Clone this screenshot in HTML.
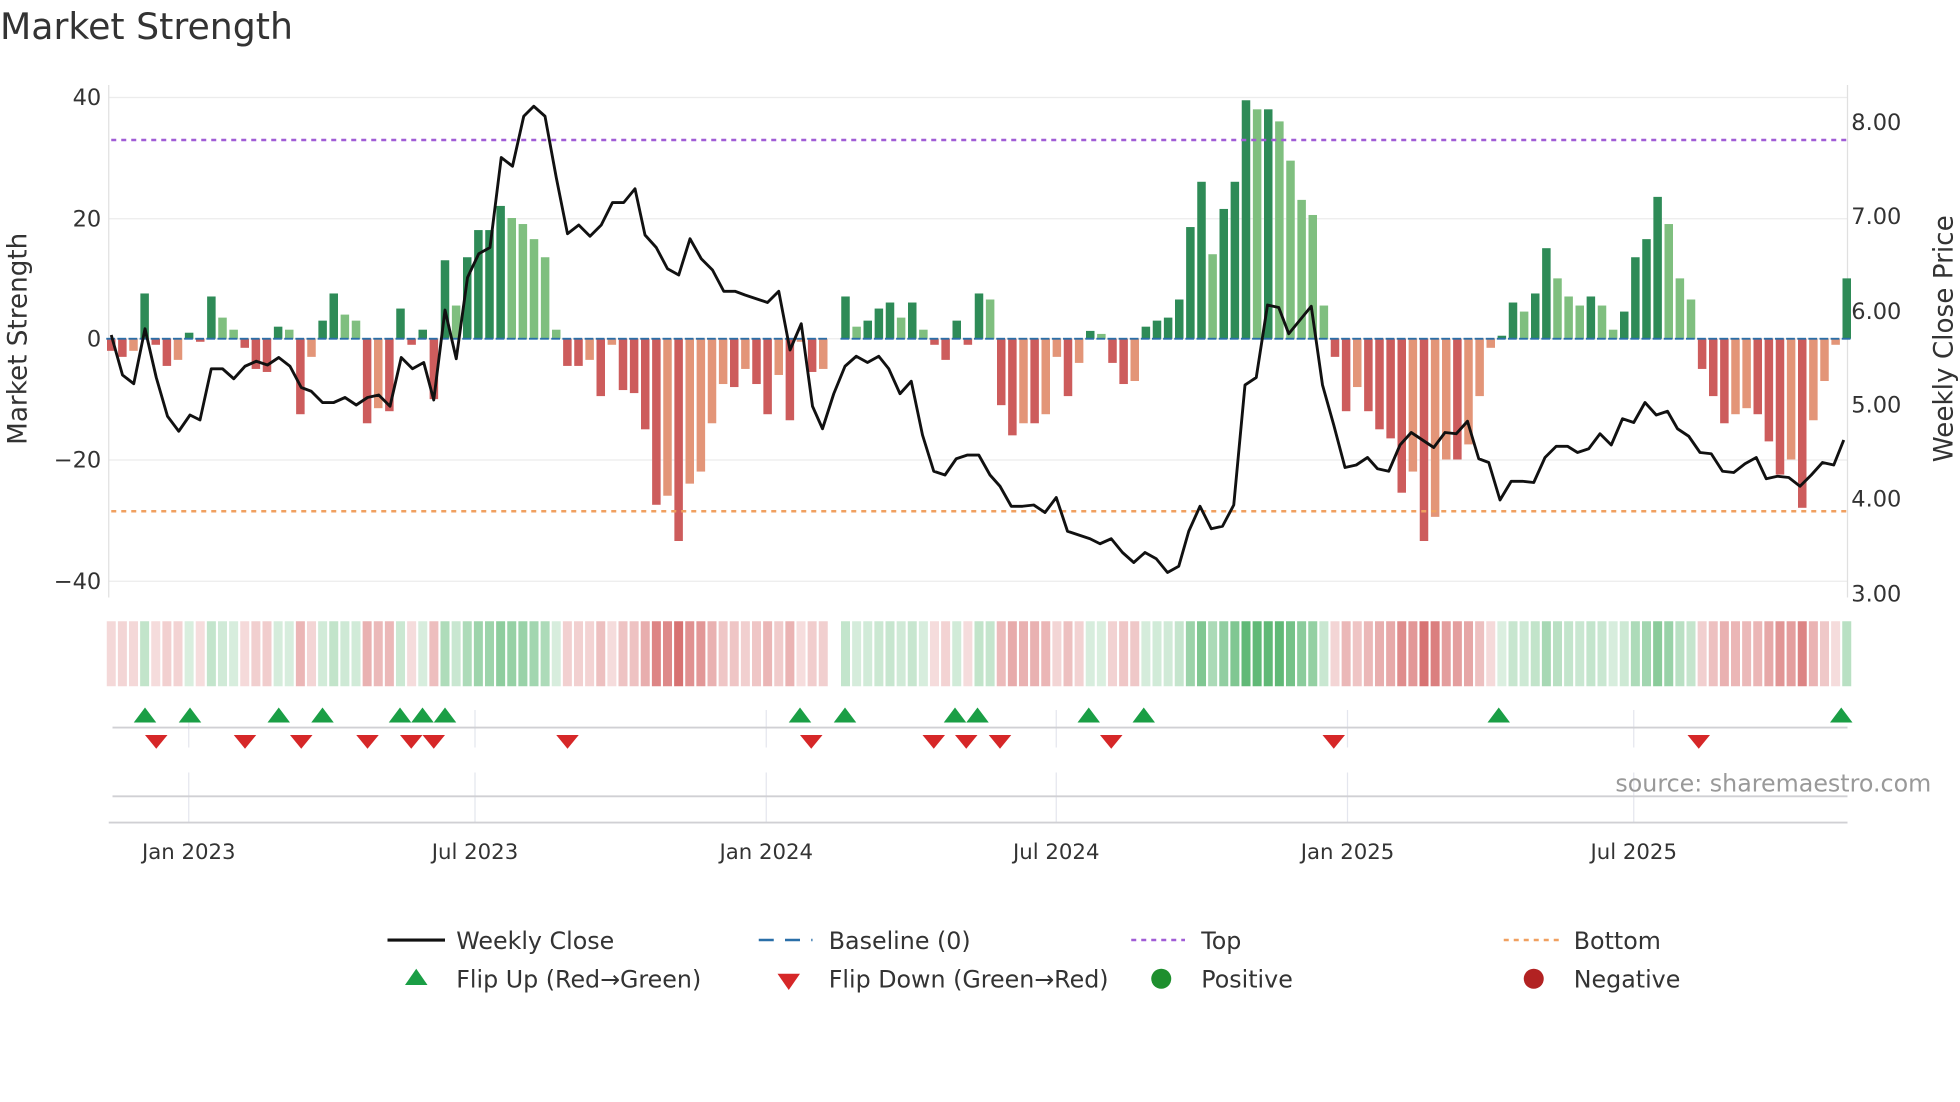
<!DOCTYPE html>
<html><head><meta charset="utf-8"><style>
html,body{margin:0;padding:0;background:#fff;}
svg{display:block;font-family:"DejaVu Sans","Liberation Sans",sans-serif;}
</style></head><body>
<svg id="c" width="1960" height="1102" viewBox="0 0 1568 881.6" xmlns="http://www.w3.org/2000/svg">
<rect width="1568" height="882" fill="#fff"/>
<text x="0" y="31" font-size="29" fill="#333">Market Strength</text>
<g stroke="#ececec" stroke-width="1">
<line x1="87" x2="1478" y1="78" y2="78"/><line x1="87" x2="1478" y1="175" y2="175"/><line x1="87" x2="1478" y1="271" y2="271"/><line x1="87" x2="1478" y1="368" y2="368"/><line x1="87" x2="1478" y1="465" y2="465"/>
</g>
<g stroke="#e4e6ee" stroke-width="1">
<line x1="151" x2="151" y1="568" y2="598"/><line x1="380" x2="380" y1="568" y2="598"/><line x1="613" x2="613" y1="568" y2="598"/><line x1="845" x2="845" y1="568" y2="598"/><line x1="1078" x2="1078" y1="568" y2="598"/><line x1="1307" x2="1307" y1="568" y2="598"/>
<line x1="151" x2="151" y1="618" y2="658"/><line x1="380" x2="380" y1="618" y2="658"/><line x1="613" x2="613" y1="618" y2="658"/><line x1="845" x2="845" y1="618" y2="658"/><line x1="1078" x2="1078" y1="618" y2="658"/><line x1="1307" x2="1307" y1="618" y2="658"/>
</g>
<line x1="87" x2="87" y1="68" y2="478" stroke="#e0e0e0"/>
<line x1="1478" x2="1478" y1="68" y2="478" stroke="#e0e0e0"/>
<g id="bars"></g>
<g id="heat"></g>
<line x1="89" x2="1478" y1="112" y2="112" stroke="#a05cd6" stroke-width="2" stroke-dasharray="4,4"/>
<line x1="89" x2="1478" y1="409" y2="409" stroke="#f0a060" stroke-width="2" stroke-dasharray="4,4"/>
<polyline id="pl" fill="none" stroke="#111" stroke-width="2.3" stroke-linejoin="round"/>
<line x1="90" x2="1478" y1="582" y2="582" stroke="#d0d0d4" stroke-width="1.5"/>
<line x1="90" x2="1478" y1="637" y2="637" stroke="#d0d0d4" stroke-width="1.5"/>
<line x1="87" x2="1478" y1="658" y2="658" stroke="#d0d0d4" stroke-width="1.5"/>
<g id="mk"></g>
<g font-size="18" fill="#333" text-anchor="end">
<text x="81" y="84">40</text><text x="81" y="181">20</text><text x="81" y="277">0</text><text x="81" y="374">−20</text><text x="81" y="471">−40</text>
</g>
<g font-size="18" fill="#333">
<text x="1481" y="104">8.00</text><text x="1481" y="179">7.00</text><text x="1481" y="255">6.00</text><text x="1481" y="330">5.00</text><text x="1481" y="405">4.00</text><text x="1481" y="481">3.00</text>
</g>
<text transform="translate(21,271) rotate(-90)" font-size="21" fill="#333" text-anchor="middle">Market Strength</text>
<text transform="translate(1562,271) rotate(-90)" font-size="21" fill="#333" text-anchor="middle">Weekly Close Price</text>
<text x="1545" y="633" font-size="19" fill="#999" text-anchor="end">source: sharemaestro.com</text>
<g font-size="17" fill="#333" text-anchor="middle">
<text x="151" y="687">Jan 2023</text><text x="380" y="687">Jul 2023</text><text x="613" y="687">Jan 2024</text><text x="845" y="687">Jul 2024</text><text x="1078" y="687">Jan 2025</text><text x="1307" y="687">Jul 2025</text>
</g>
<g font-size="19" fill="#333">
<line x1="310" x2="356" y1="752" y2="752" stroke="#111" stroke-width="2.5"/><text x="365" y="759">Weekly Close</text>
<line x1="607" x2="650" y1="752" y2="752" stroke="#2a6fa8" stroke-width="2" stroke-dasharray="12,9"/><text x="663" y="759">Baseline (0)</text>
<line x1="905" x2="948" y1="752" y2="752" stroke="#a05cd6" stroke-width="2" stroke-dasharray="4,4"/><text x="961" y="759">Top</text>
<line x1="1203" x2="1247" y1="752" y2="752" stroke="#f0a060" stroke-width="2" stroke-dasharray="4,4"/><text x="1259" y="759">Bottom</text>
<polygon points="324,788 342,788 333,775" fill="#1a9e45"/><text x="365" y="790">Flip Up (Red→Green)</text>
<polygon points="622,779 640,779 631,792" fill="#d62728"/><text x="663" y="790">Flip Down (Green→Red)</text>
<circle cx="929" cy="783" r="8" fill="#1e8f2e"/><text x="961" y="790">Positive</text>
<circle cx="1227" cy="783" r="8" fill="#b22222"/><text x="1259" y="790">Negative</text>
</g>
</svg>
<script>
var v=[-2,-3,-2,7.5,-1,-4.5,-3.5,1,-0.5,7,3.5,1.5,-1.5,-5,-5.5,2,1.5,-12.5,-3,3,7.5,4,3,-14,-11.5,-12,5,-1,1.5,-10,13,5.5,13.5,18,18,22,20,19,16.5,13.5,1.5,-4.5,-4.5,-3.5,-9.5,-1,-8.5,-9,-15,-27.5,-26,-33.5,-24,-22,-14,-7.5,-8,-5,-7.5,-12.5,-6,-13.5,-0.5,-5.5,-5,null,7,2,3,5,6,3.5,6,1.5,-1,-3.5,3,-1,7.5,6.5,-11,-16,-14,-14,-12.5,-3,-9.5,-4,1.3,0.8,-4,-7.5,-7,2,3,3.5,6.5,18.5,26,14,21.5,26,39.5,38,38,36,29.5,23,20.5,5.5,-3,-12,-8,-12,-15,-16.5,-25.5,-22,-33.5,-29.5,-20,-20,-17.5,-9.5,-1.5,0.5,6,4.5,7.5,15,10,7,5.5,7,5.5,1.5,4.5,13.5,16.5,23.5,19,10,6.5,-5,-9.5,-14,-12.5,-11.5,-12.5,-17,-22.5,-20,-28,-13.5,-7,-1,10];
var ns="http://www.w3.org/2000/svg",b=document.getElementById('bars'),h=document.getElementById('heat');
function el(p,t,a){var e=document.createElementNS(ns,t);for(var k in a)e.setAttribute(k,a[k]);p.appendChild(e);return e;}
var prev=0;
for(var i=0;i<v.length;i++){var x=89+8.9*i,y0=271,val=v[i];if(val===null){prev=0;continue;}
var hgt=Math.abs(val)*4.83,c;
if(val>=0)c=(val>=prev)?'#2e8b57':'#7fbf7f';else c=(val<=prev)?'#cd5c5c':'#e39578';
el(b,'rect',{x:x-3.4,y:val>=0?y0-hgt:y0,width:6.8,height:Math.max(hgt,0.8),fill:c});
el(b,'line',{x1:x-4,x2:x+3,y1:271,y2:271,stroke:'#2a6fa8','stroke-width':1.5});
var a=Math.min(1,0.22+Math.abs(val)/45);
el(h,'rect',{x:x-3.6,y:497,width:7.2,height:52,fill:val>=0?'#2ca24a':'#c83c3c','fill-opacity':a*0.75});
prev=val;}
var pts="89,268 98,300 107,307 116,263 125,302 134,333 143,345 152,332 160,336 169,295 178,295 187,303 196,293 205,289 214,292 223,286 232,293 241,310 249,313 258,322 267,322 276,318 285,324 294,318 303,316 312,325 321,286 330,295 339,290 347,320 356,248 365,287 374,222 383,203 392,198 401,126 410,133 419,93 427,85 436,93 445,142 454,187 463,180 472,189 481,180 490,162 499,162 508,151 516,188 525,198 534,215 543,220 552,191 561,207 570,216 579,233 588,233 596,236 605,239 614,242 623,233 632,280 641,259 650,325 658,343 667,315 676,293 685,285 694,290 703,285 711,295 720,315 729,305 738,348 747,377 756,380 765,367 774,364 783,364 792,380 800,389 809,405 818,405 827,404 836,410 845,398 854,425 863,428 872,431 880,435 889,431 898,442 907,450 916,442 925,447 934,458 943,453 951,425 960,405 969,423 978,421 987,404 996,308 1005,302 1014,244 1023,246 1031,267 1040,256 1049,245 1058,308 1067,340 1076,374 1085,372 1094,366 1102,375 1111,377 1120,356 1129,346 1138,352 1147,358 1156,346 1165,347 1174,337 1183,367 1191,370 1200,400 1209,385 1218,385 1227,386 1236,366 1245,357 1254,357 1262,362 1271,359 1280,347 1289,356 1298,335 1307,338 1316,322 1325,332 1334,329 1342,343 1351,349 1360,362 1369,363 1378,377 1387,378 1396,371 1405,366 1413,383 1422,381 1431,382 1440,389 1449,380 1458,370 1467,372 1475,352";
document.getElementById('pl').setAttribute('points',pts);
var m=document.getElementById('mk');
[116,152,223,258,320,338,356,640,676,764,782,871,915,1199,1473].forEach(function(x){el(m,'polygon',{points:(x-9)+',578 '+(x+9)+',578 '+x+',566',fill:'#1a9e45'});});
[125,196,241,294,329,347,454,649,747,773,800,889,1067,1359].forEach(function(x){el(m,'polygon',{points:(x-9)+',588 '+(x+9)+',588 '+x+',599',fill:'#d62728'});});
</script>
</body></html>
